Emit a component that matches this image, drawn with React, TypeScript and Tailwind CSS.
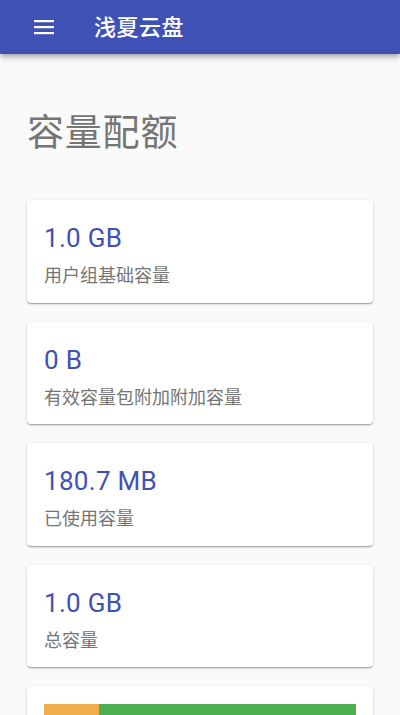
const font = { fontFamily: 'Roboto, "Noto Sans CJK SC", sans-serif' };

const quotas = [
  { value: "1.0 GB", label: "用户组基础容量" },
  { value: "0 B", label: "有效容量包附加附加容量" },
  { value: "180.7 MB", label: "已使用容量" },
  { value: "1.0 GB", label: "总容量" },
];

function MenuIcon() {
  return (
    <svg width="20" height="16" viewBox="0 0 20 16" fill="#fff" aria-hidden>
      <rect x="0" y="1" width="20" height="2.2" />
      <rect x="0" y="7" width="20" height="2.2" />
      <rect x="0" y="13" width="20" height="2.2" />
    </svg>
  );
}

function QuotaCard({ value, label }: { value: string; label: string }) {
  return (
    <div className="flex h-[102.5px] flex-col rounded bg-white px-[17px] pt-[22px] shadow-[0_1px_3px_rgba(0,0,0,0.2),0_1px_1px_rgba(0,0,0,0.14),0_2px_1px_-1px_rgba(0,0,0,0.12)]">
      <div className="text-[26px] leading-[32px] tracking-[0.3px] text-[#3f51b5]">{value}</div>
      <div className="mt-[9px] text-[18px] leading-[26px] text-[#757575]">{label}</div>
    </div>
  );
}

export default function App() {
  return (
    <div className="h-[715px] overflow-hidden bg-[#fafafa]" style={font}>
      <header className="relative z-10 flex h-[54px] items-center bg-[#3f51b5] pl-[34px] shadow-[0_2px_4px_-1px_rgba(0,0,0,0.2),0_4px_5px_0_rgba(0,0,0,0.14),0_1px_10px_0_rgba(0,0,0,0.12)]">
        <MenuIcon />
        <span className="ml-[40px] text-[22px] font-medium tracking-[0.5px] text-white">浅夏云盘</span>
      </header>

      <main className="px-[27px]">
        <h1 className="mt-[58px] mb-[44px] text-[37px] leading-[44px] tracking-[0.8px] text-[#757575]">容量配额</h1>

        <div className="flex flex-col gap-[19px]">
          {quotas.map((q, i) => (
            <QuotaCard key={i} value={q.value} label={q.label} />
          ))}
          <div className="h-[80px] rounded bg-white px-[17px] pt-[18px] shadow-[0_1px_3px_rgba(0,0,0,0.2),0_1px_1px_rgba(0,0,0,0.14),0_2px_1px_-1px_rgba(0,0,0,0.12)]">
            <div className="flex h-[24px]">
              <div className="w-[55px] bg-[#f0ad4e]" />
              <div className="flex-1 bg-[#4caf50]" />
            </div>
          </div>
        </div>
      </main>
    </div>
  );
}
